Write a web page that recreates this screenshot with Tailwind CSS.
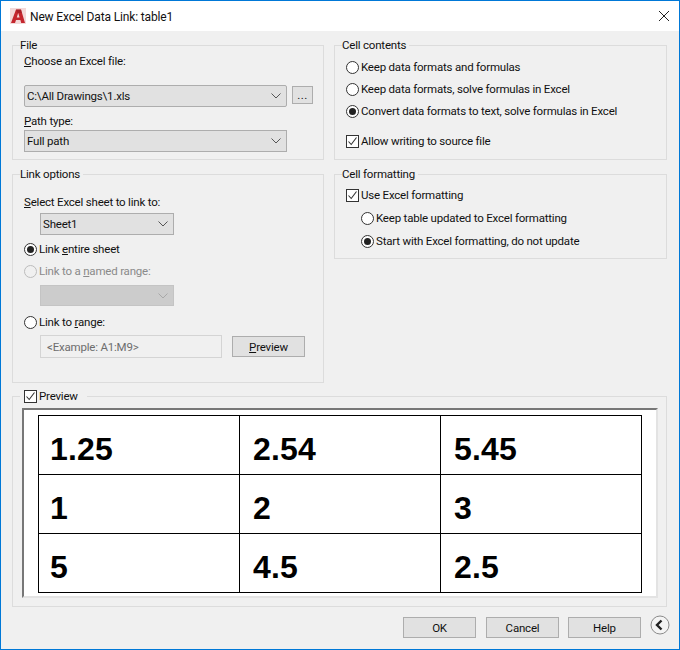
<!DOCTYPE html>
<html lang="en">
<head>
    <meta charset="UTF-8">
    <title>New Excel Data Link: table1</title>
    <script src="https://cdn.jsdelivr.net/npm/@tailwindcss/browser@4"></script>
</head>
<body class="bg-[#f0f0f0]">
<div class="w-[680px] h-[650px] border border-[#0078d7] bg-[#f0f0f0] overflow-hidden text-[11.5px] tracking-[-0.2px] leading-[16px] text-[#111] font-['Roboto',sans-serif]">

    <!-- Title bar -->
    <div class="h-[30px] bg-white flex items-center">
        <svg class="ml-[9px] w-[16px] h-[16px]" viewBox="0 0 16 16">
            <rect width="16" height="16" fill="#f3d9d9"/>
            <path d="M1 15 L6 1.5 H11 L15 15 H11.2 L10.4 12 H6 L5 15 Z" fill="#c4262e"/>
            <path d="M6.8 9.5 L8.2 5 L9.6 9.5 Z" fill="#f3d9d9"/>
            <path d="M6 1.5 H11 L12 5 H7.5 Z" fill="#8e1b22" opacity="0.5"/>
        </svg>
        <span class="ml-[4px] pt-px text-[12px] tracking-[-0.15px]">New Excel Data Link: table1</span>
        <svg class="ml-auto mr-[10px] w-[10px] h-[10px]" viewBox="0 0 10 10">
            <path d="M0 0 L10 10 M10 0 L0 10" stroke="#222" stroke-width="1"/>
        </svg>
    </div>

    <div class="pl-[11px] pr-[12px]">
        <div class="flex gap-[10px]">
            <!-- Left column -->
            <div class="w-[312px]">
                <fieldset class="mt-[6px] h-[123px] border border-[#dcdcdc] px-[7px]">
                    <legend class="h-[16px] pr-[3px]">File</legend>
                    <div class="pl-[4px]">
                        <div class="h-[16px]"><u>C</u>hoose an Excel file:</div>
                        <div class="mt-[16px] flex items-start gap-[5px]">
                            <div class="w-[263px] h-[22px] bg-[#e1e1e1] border border-[#adadad] rounded-[2px] flex items-center justify-between pl-[2px] pr-[5px]">
                                <span>C:\All Drawings\1.xls</span>
                                <svg class="w-[10px] h-[6px]" viewBox="0 0 10 6"><path d="M0.5 0.5 L5 5 L9.5 0.5" fill="none" stroke="#555"/></svg>
                            </div>
                            <div class="mt-px w-[21px] h-[18px] bg-[#e1e1e1] border border-[#adadad] flex items-center justify-center tracking-[0.5px]">...</div>
                        </div>
                        <div class="mt-[6px] h-[16px]"><u>P</u>ath type:</div>
                        <div class="mt-px w-[263px] h-[22px] bg-[#e1e1e1] border border-[#adadad] flex items-center justify-between pl-[2px] pr-[5px]">
                            <span>Full path</span>
                            <svg class="w-[10px] h-[6px]" viewBox="0 0 10 6"><path d="M0.5 0.5 L5 5 L9.5 0.5" fill="none" stroke="#555"/></svg>
                        </div>
                    </div>
                </fieldset>

                <fieldset class="mt-[6px] h-[217px] border border-[#dcdcdc] px-[7px]">
                    <legend class="h-[16px] pr-[3px]">Link options</legend>
                    <div class="pl-[4px]">
                        <div class="mt-[12px] h-[16px]"><u>S</u>elect Excel sheet to link to:</div>
                        <div class="mt-[3px] ml-[16px] w-[134px] h-[22px] bg-[#e1e1e1] border border-[#adadad] flex items-center justify-between pl-[2px] pr-[5px]">
                            <span>Sheet1</span>
                            <svg class="w-[10px] h-[6px]" viewBox="0 0 10 6"><path d="M0.5 0.5 L5 5 L9.5 0.5" fill="none" stroke="#555"/></svg>
                        </div>
                        <div class="mt-[6px] h-[16px] flex items-center gap-[2px]">
                            <span class="w-[13px] h-[13px] rounded-full border border-[#333] bg-white flex items-center justify-center"><span class="w-[7px] h-[7px] rounded-full bg-[#222]"></span></span>
                            <span>Link <u>e</u>ntire sheet</span>
                        </div>
                        <div class="mt-[6px] h-[16px] flex items-center gap-[2px] text-[#8a8a8a]">
                            <span class="w-[13px] h-[13px] rounded-full border border-[#bcbcbc] bg-[#f0f0f0]"></span>
                            <span>Link to a <u>n</u>amed range:</span>
                        </div>
                        <div class="mt-[6px] ml-[16px] w-[134px] h-[21px] bg-[#cccccc] border border-[#c4c4c4] flex items-center justify-end pr-[5px]">
                            <svg class="w-[10px] h-[6px]" viewBox="0 0 10 6"><path d="M0.5 0.5 L5 5 L9.5 0.5" fill="none" stroke="#a8a8a8"/></svg>
                        </div>
                        <div class="mt-[8px] h-[16px] flex items-center gap-[2px]">
                            <span class="w-[13px] h-[13px] rounded-full border border-[#333] bg-white"></span>
                            <span>Link to <u>r</u>ange:</span>
                        </div>
                        <div class="mt-[5px] ml-[16px] flex items-start gap-[10px]">
                            <div class="w-[182px] h-[23px] border border-[#d4d4d4] flex items-center pl-[6px] text-[#6d6d6d]"><span>&lt;Example: A1:M9&gt;</span></div>
                            <div class="mt-px w-[73px] h-[21px] bg-[#e1e1e1] border border-[#adadad] flex items-center justify-center"><span><u>P</u>review</span></div>
                        </div>
                    </div>
                </fieldset>
            </div>

            <!-- Right column -->
            <div class="w-[333px]">
                <fieldset class="mt-[6px] h-[123px] border border-[#dcdcdc] px-[7px]">
                    <legend class="h-[16px] pr-[3px]">Cell contents</legend>
                    <div class="pl-[4px]">
                        <div class="mt-[6px] h-[16px] flex items-center gap-[2px]">
                            <span class="w-[13px] h-[13px] rounded-full border border-[#333] bg-white"></span>
                            <span>Keep data formats and formulas</span>
                        </div>
                        <div class="mt-[6px] h-[16px] flex items-center gap-[2px]">
                            <span class="w-[13px] h-[13px] rounded-full border border-[#333] bg-white"></span>
                            <span>Keep data formats, solve formulas in Excel</span>
                        </div>
                        <div class="mt-[6px] h-[16px] flex items-center gap-[2px]">
                            <span class="w-[13px] h-[13px] rounded-full border border-[#333] bg-white flex items-center justify-center"><span class="w-[7px] h-[7px] rounded-full bg-[#222]"></span></span>
                            <span>Convert data formats to text, solve formulas in Excel</span>
                        </div>
                        <div class="mt-[14px] h-[16px] flex items-center gap-[2px]">
                            <span class="w-[13px] h-[13px] border border-[#333] bg-white flex items-center justify-center">
                                <svg class="w-[11px] h-[11px]" viewBox="0 0 11 11"><path d="M1.5 5.5 L4.2 8.5 L9.5 1.5" fill="none" stroke="#333" stroke-width="1.1"/></svg>
                            </span>
                            <span>Allow writing to source file</span>
                        </div>
                    </div>
                </fieldset>

                <fieldset class="mt-[6px] h-[93px] border border-[#dcdcdc] px-[7px]">
                    <legend class="h-[16px] pr-[3px]">Cell formatting</legend>
                    <div class="pl-[4px]">
                        <div class="mt-[5px] h-[16px] flex items-center gap-[2px]">
                            <span class="w-[13px] h-[13px] border border-[#333] bg-white flex items-center justify-center">
                                <svg class="w-[11px] h-[11px]" viewBox="0 0 11 11"><path d="M1.5 5.5 L4.2 8.5 L9.5 1.5" fill="none" stroke="#333" stroke-width="1.1"/></svg>
                            </span>
                            <span>Use Excel formatting</span>
                        </div>
                        <div class="mt-[7px] ml-[15px] h-[16px] flex items-center gap-[2px]">
                            <span class="w-[13px] h-[13px] rounded-full border border-[#333] bg-white"></span>
                            <span>Keep table updated to Excel formatting</span>
                        </div>
                        <div class="mt-[7px] ml-[15px] h-[16px] flex items-center gap-[2px]">
                            <span class="w-[13px] h-[13px] rounded-full border border-[#333] bg-white flex items-center justify-center"><span class="w-[7px] h-[7px] rounded-full bg-[#222]"></span></span>
                            <span>Start with Excel formatting, do not update</span>
                        </div>
                    </div>
                </fieldset>
            </div>
        </div>

        <!-- Preview -->
        <fieldset class="mt-[5px] h-[219px] border border-[#dcdcdc] px-[7px]">
            <legend class="h-[16px] pl-[4px] pr-[9px] flex items-center gap-[2px]">
                <span class="w-[13px] h-[13px] border border-[#333] bg-white flex items-center justify-center">
                    <svg class="w-[11px] h-[11px]" viewBox="0 0 11 11"><path d="M1.5 5.5 L4.2 8.5 L9.5 1.5" fill="none" stroke="#333" stroke-width="1.1"/></svg>
                </span>
                <span>Preview</span>
            </legend>
            <div class="mt-[4px] ml-[2px] w-[636px] h-[190px] bg-white border-t-2 border-l-2 border-b-2 border-r-2 border-t-[#777] border-l-[#777] border-b-[#e3e3e3] border-r-[#e3e3e3] pt-[5px] pl-[14px]">
                <table class="w-[604px] h-[178px] table-fixed border-collapse text-[32px] tracking-[0.2px] font-bold font-['Liberation_Sans',sans-serif] text-black">
                    <tbody>
                        <tr>
                            <td class="border border-black pt-[7px] pl-[11px]">1.25</td>
                            <td class="border border-black pt-[7px] pl-[13px]">2.54</td>
                            <td class="border border-black pt-[7px] pl-[13px]">5.45</td>
                        </tr>
                        <tr>
                            <td class="border border-black pt-[7px] pl-[11px]">1</td>
                            <td class="border border-black pt-[7px] pl-[13px]">2</td>
                            <td class="border border-black pt-[7px] pl-[13px]">3</td>
                        </tr>
                        <tr>
                            <td class="border border-black pt-[7px] pl-[11px]">5</td>
                            <td class="border border-black pt-[7px] pl-[13px]">4.5</td>
                            <td class="border border-black pt-[7px] pl-[13px]">2.5</td>
                        </tr>
                    </tbody>
                </table>
            </div>
        </fieldset>

        <!-- Footer buttons -->
        <div class="mt-[8px] -mr-px flex justify-end items-start">
            <div class="mt-[2px] w-[73px] h-[21px] bg-[#e1e1e1] border border-[#adadad] flex items-center justify-center"><span>OK</span></div>
            <div class="mt-[2px] ml-[10px] w-[73px] h-[21px] bg-[#e1e1e1] border border-[#adadad] flex items-center justify-center"><span>Cancel</span></div>
            <div class="mt-[2px] ml-[9px] w-[73px] h-[21px] bg-[#e1e1e1] border border-[#adadad] flex items-center justify-center"><span>Help</span></div>
            <svg class="ml-[9px] -mr-[2px] w-[20px] h-[20px]" viewBox="0 0 20 20">
                <circle cx="10" cy="10" r="9" fill="#f4f4f4" stroke="#8a8a8a"/>
                <path d="M11.5 5.5 L7 10 L11.5 14.5" fill="none" stroke="#222" stroke-width="2.4"/>
            </svg>
        </div>
    </div>
</div>
</body>
</html>
